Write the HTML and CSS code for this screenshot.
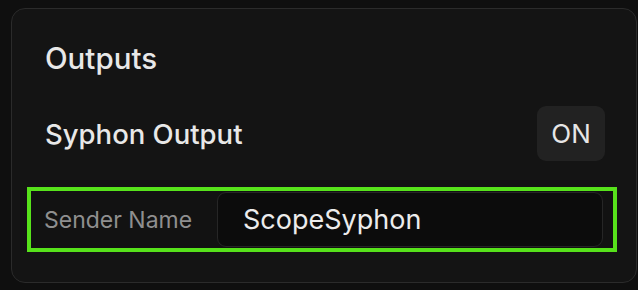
FILE: index.html
```html
<!DOCTYPE html>
<html>
<head>
<meta name="viewport" content="width=device-width, initial-scale=1.0">
<title>Outputs</title>
<link rel="stylesheet" href="styles.css">
</head>
<body>

<div class="panel">
    <h2 class="panel-title">Outputs</h2>
    <div class="toggle-row">
        <span class="toggle-label">Syphon Output</span>
        <button class="toggle-btn">ON</button>
    </div>
    <div class="field-row">
        <label for="senderName">Sender Name</label>
        <input type="text" id="senderName" value="ScopeSyphon">
    </div>
</div>

</body>
</html>
```

FILE: styles.css
```css
* {
    box-sizing: border-box;
}
body {
    margin: 0;
    background-color: #0f0f0f;
    font-family: Inter, "Noto Sans", sans-serif;
}
.panel {
    width: 626px;
    height: 275px;
    margin: 8px 1px 0 11px;
    padding-top: 32px;
    border: 1px solid #2b2b2b;
    border-radius: 14px;
    background-color: #141414;
}
.panel-title {
    margin: 0;
    padding: 0 33px;
    font-size: 29.5px;
    font-weight: 500;
    line-height: 34px;
    color: #e8e8e8;
}
.toggle-row {
    display: flex;
    align-items: center;
    justify-content: space-between;
    margin-top: 31px;
    padding: 0 31px 0 33px;
}
.toggle-label {
    font-size: 27.5px;
    font-weight: 500;
    color: #e8e8e8;
}
.toggle-btn {
    width: 68px;
    height: 55px;
    border: none;
    border-radius: 9px;
    background-color: #222222;
    color: #e6e6e6;
    font-family: Inter, sans-serif;
    font-size: 26px;
    padding: 0;
}
.field-row {
    display: flex;
    align-items: center;
    height: 65px;
    margin: 26px 19px 0 15px;
    padding-right: 10px;
    border: 4px solid #57e21b;
    background-color: #121212;
}
.field-row label {
    flex: 0 0 186px;
    padding-left: 13px;
    font-size: 23px;
    color: #8f8f8f;
    white-space: nowrap;
}
.field-row input {
    flex: 1;
    min-width: 0;
    height: 55px;
    padding: 0 0 0 25px;
    border: 1px solid #262626;
    border-radius: 9px;
    background-color: #0c0c0c;
    color: #ececec;
    font-family: Inter, sans-serif;
    font-size: 27px;
    outline: none;
}
```
